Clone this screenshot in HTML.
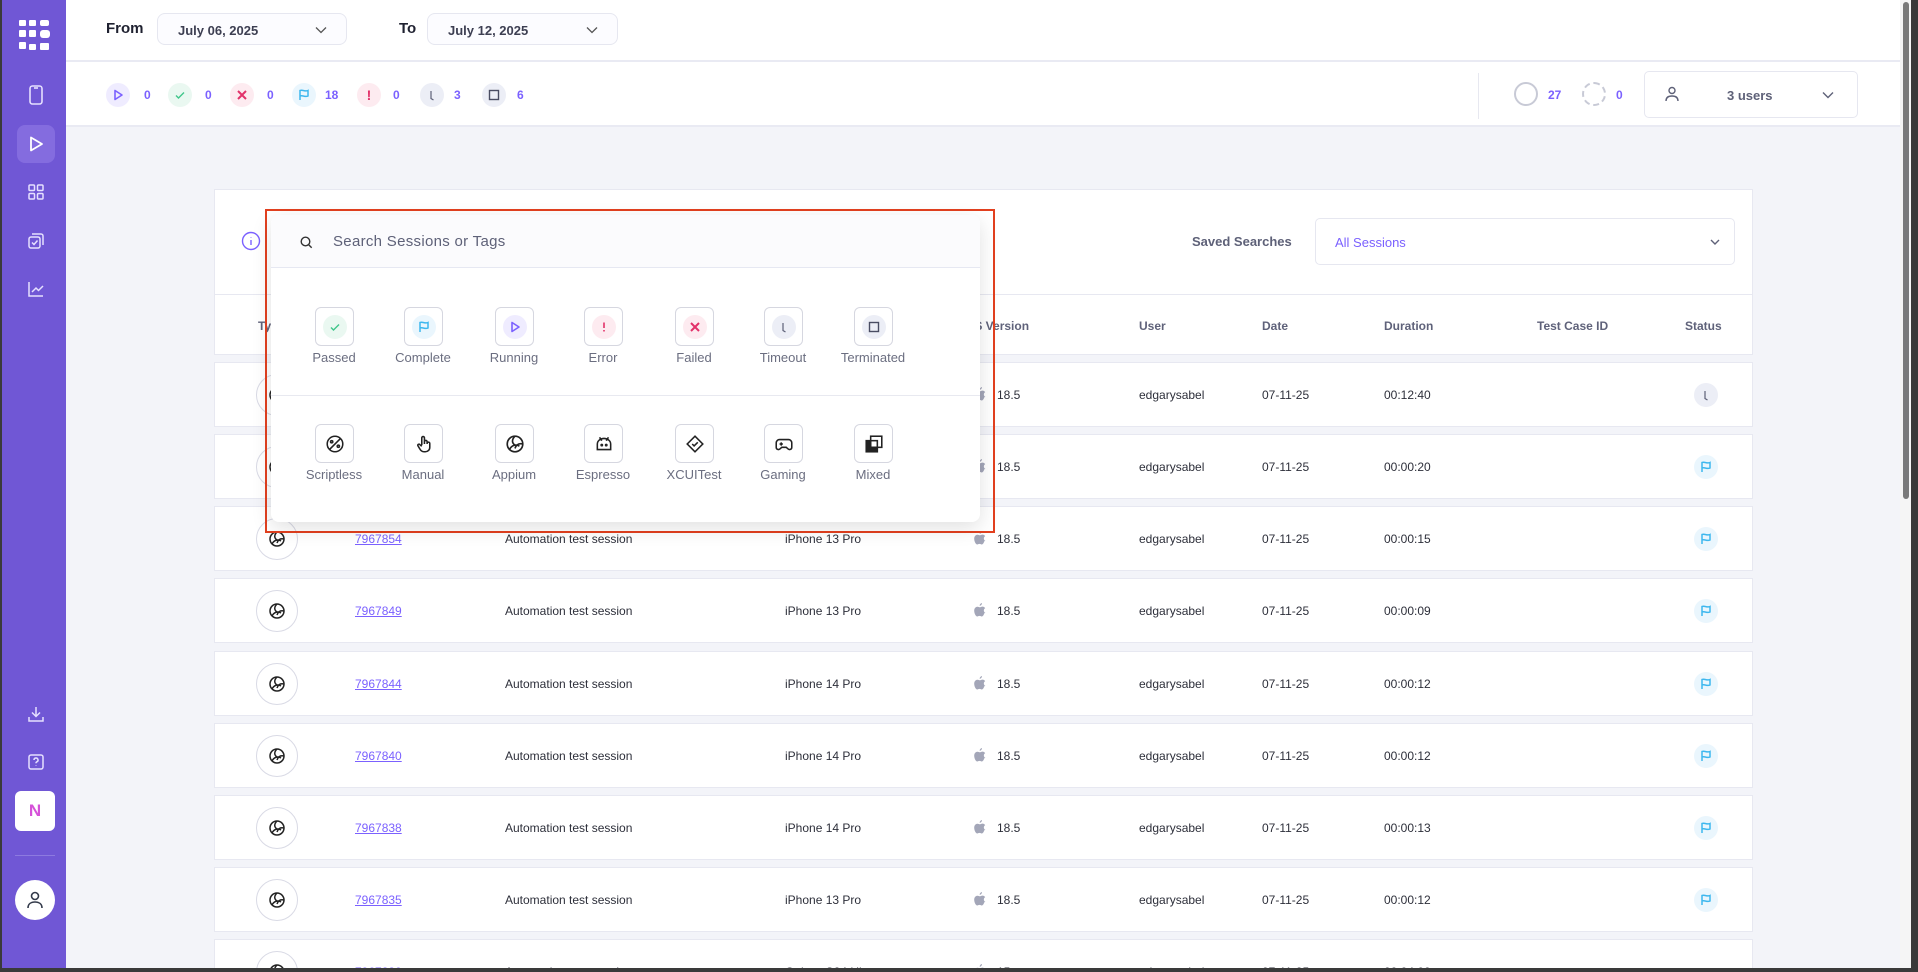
<!DOCTYPE html>
<html><head><meta charset="utf-8"><style>
*{box-sizing:border-box;margin:0;padding:0}
body{width:1918px;height:972px;overflow:hidden;background:#f3f4f9;font-family:"Liberation Sans",sans-serif;position:relative;color:#2d2f3a}
.abs{position:absolute}
#side{left:0;top:0;width:66px;height:972px;background:#7057d5;border-left:2px solid #3a3a3a}
.nav{position:absolute;left:15px;width:38px;height:38px;display:flex;align-items:center;justify-content:center}
#top{left:66px;top:0;width:1834px;height:62px;background:#fff;border-bottom:2px solid #e9eaf3}
#stats{left:66px;top:62px;width:1834px;height:65px;background:#fff;border-bottom:2px solid #e9eaf3}
.lbl{font-weight:bold;font-size:15px;color:#1f2130}
.date{border:1px solid #e6e7f0;border-radius:8px;background:#fcfcff;height:32px;font-weight:bold;font-size:13px;color:#3d3f52;padding:9px 20px}
.chev{position:absolute;right:18px;top:9px}
.st{position:absolute;top:21px;width:24px;height:24px;border-radius:50%;display:flex;align-items:center;justify-content:center}
.sn{position:absolute;top:26px;font-size:12px;font-weight:bold;color:#7b61ff}
.card{position:absolute;left:214px;width:1539px;background:#fff;border:1px solid #e7e8f1}
.row{height:65px}
.t{position:absolute;font-size:12px;color:#2d2f3a;top:25px}
.h{position:absolute;font-size:12px;font-weight:bold;color:#5f627a;top:24px}
.ty{position:absolute;left:41px;top:11px;width:42px;height:42px;border-radius:50%;border:1px solid #d9dae5;display:flex;align-items:center;justify-content:center}
.sc{position:absolute;left:1479px;top:20px;width:24px;height:24px;border-radius:50%;background:#eaf6fd;display:flex;align-items:center;justify-content:center}
.ap{position:absolute;left:759px;top:24px}
.ib{position:absolute;width:39px;height:39px;border:1px solid #d6d7e0;border-radius:6px;background:#fff;display:flex;align-items:center;justify-content:center}
.ic{width:24px;height:24px;border-radius:50%;display:flex;align-items:center;justify-content:center}
.il{position:absolute;width:100px;text-align:center;font-size:13px;color:#6b6e80}
#rowsclip{position:absolute;left:0;top:0;width:1900px;height:968px;overflow:hidden}
</style></head><body>

<svg width="0" height="0" style="position:absolute">
 <defs>
  <symbol id="appium" viewBox="0 0 18 18"><g fill="none" stroke="#222" stroke-width="1.5"><circle cx="9" cy="9" r="7"/><path d="M9 2c-3 3-3 6 0 8M16 9c-4-1-6 1-7 4M4 14c2-4 6-5 9-3"/></g></symbol>
  <symbol id="apple" viewBox="0 0 12 14"><path fill="#a3a6b8" d="M8 0c0 1.5-1 2.7-2.3 2.8C5.6 1.4 6.7.2 8 0zM10.5 10c-.6 1.5-1.5 3.5-2.7 3.5-1 0-1.3-.6-2.3-.6s-1.4.6-2.3.6C2 13.5.2 10.5.2 7.7.2 5 2 3.7 3.5 3.7c1 0 1.8.6 2.3.6.6 0 1.5-.7 2.6-.7.6 0 2 .2 2.8 1.5-2 1.2-1.7 4 .3 4.9z"/></symbol>
  <symbol id="flag" viewBox="0 0 12 12"><path fill="none" stroke="#3db7ee" stroke-width="1.5" d="M2 11V1.5c3-1 5 1.5 8 0V7c-3 1.5-5-1-8 0"/></symbol>
 </defs>
</svg>

<div id="side" class="abs">
 <svg class="abs" style="left:17px;top:20px" width="32" height="32" viewBox="0 0 32 32" fill="#fff">
  <rect x="0" y="0" width="7" height="6" rx="1"/><rect x="10" y="0" width="7" height="6" rx="1"/><rect x="21" y="0" width="9" height="6" rx="2"/>
  <rect x="0" y="10" width="7" height="7" rx="1"/><rect x="10" y="10" width="7" height="7" rx="1"/><rect x="21" y="10" width="10" height="8" rx="3"/>
  <rect x="0" y="22" width="7" height="7" rx="1"/><rect x="10" y="24" width="7" height="6" rx="1"/><rect x="21" y="23" width="9" height="7" rx="1"/>
 </svg>
 <div class="nav" style="top:76px"><svg width="18" height="20" viewBox="0 0 18 20" fill="none" stroke="#e6e0ff" stroke-width="1.6"><rect x="3" y="1" width="12" height="18" rx="2.5"/><path d="M7 3h4"/></svg></div>
 <div class="nav" style="top:125px;background:#846cdf;border-radius:8px"><svg width="18" height="18" viewBox="0 0 18 18" fill="none" stroke="#fff" stroke-width="1.8"><path d="M4 2.5v13l11-6.5z" stroke-linejoin="round"/></svg></div>
 <div class="nav" style="top:173px"><svg width="18" height="18" viewBox="0 0 18 18" fill="none" stroke="#e6e0ff" stroke-width="1.5"><rect x="2" y="2" width="5.5" height="5.5" rx="1"/><rect x="10.5" y="2" width="5.5" height="5.5" rx="1"/><rect x="2" y="10.5" width="5.5" height="5.5" rx="1"/><rect x="10.5" y="10.5" width="5.5" height="5.5" rx="1"/></svg></div>
 <div class="nav" style="top:222px"><svg width="18" height="18" viewBox="0 0 18 18" fill="none" stroke="#e6e0ff" stroke-width="1.5"><rect x="2" y="5" width="11" height="11" rx="2"/><path d="M5 2h9a2 2 0 0 1 2 2v9"/><path d="M5 10.5l2 2 3.5-4"/></svg></div>
 <div class="nav" style="top:270px"><svg width="18" height="18" viewBox="0 0 18 18" fill="none" stroke="#e6e0ff" stroke-width="1.5"><path d="M2 2v14h14"/><path d="M5 12l4-4 2.5 2.5L16 6"/></svg></div>
 <div class="nav" style="top:695px"><svg width="18" height="18" viewBox="0 0 18 18" fill="none" stroke="#e6e0ff" stroke-width="1.5"><path d="M9 2v9M5 7.5l4 4 4-4M2 12v4h14v-4"/></svg></div>
 <div class="nav" style="top:743px"><svg width="18" height="18" viewBox="0 0 18 18" fill="none" stroke="#e6e0ff" stroke-width="1.5"><rect x="2" y="2" width="14" height="14" rx="2"/><path d="M7 7a2 2 0 1 1 2.8 1.8c-.6.3-.8.7-.8 1.4M9 12.5v.5"/></svg></div>
 <div class="abs" style="left:13px;top:791px;width:40px;height:40px;border-radius:6px;background:#fff;color:#d552d8;font-size:17px;font-weight:bold;text-align:center;line-height:40px">N</div>
 <div class="abs" style="left:13px;top:855px;width:40px;height:1px;background:#8d7ae0"></div>
 <div class="abs" style="left:13px;top:880px;width:40px;height:40px;border-radius:50%;background:#fff;display:flex;align-items:center;justify-content:center"><svg width="20" height="20" viewBox="0 0 20 20" fill="none" stroke="#333a4a" stroke-width="1.6"><circle cx="10" cy="6" r="3.5"/><path d="M3 18c0-4 3-6 7-6s7 2 7 6"/></svg></div>
</div>

<div id="top" class="abs">
 <div class="abs lbl" style="left:40px;top:20px">From</div>
 <div class="abs date" style="left:91px;top:13px;width:190px">July 06, 2025<svg class="chev" width="14" height="14" viewBox="0 0 14 14" fill="none" stroke="#555" stroke-width="1.3"><path d="M2 4.5l5 5 5-5"/></svg></div>
 <div class="abs lbl" style="left:333px;top:20px">To</div>
 <div class="abs date" style="left:361px;top:13px;width:191px">July 12, 2025<svg class="chev" width="14" height="14" viewBox="0 0 14 14" fill="none" stroke="#555" stroke-width="1.3"><path d="M2 4.5l5 5 5-5"/></svg></div>
</div>

<div id="stats" class="abs">
 <div class="st" style="left:40px;background:#efecff"><svg width="12" height="12" viewBox="0 0 12 12" fill="none" stroke="#7b61ff" stroke-width="1.6"><path d="M3 1.5v9l7-4.5z" stroke-linejoin="round"/></svg></div><div class="sn" style="left:78px">0</div>
 <div class="st" style="left:102px;background:#eaf8f1"><svg width="12" height="12" viewBox="0 0 12 12" fill="none" stroke="#3fc68a" stroke-width="1.4"><path d="M2 6.5l2.5 2.5L10 3.5"/></svg></div><div class="sn" style="left:139px">0</div>
 <div class="st" style="left:164px;background:#fdebf0"><svg width="12" height="12" viewBox="0 0 12 12" fill="none" stroke="#e2326a" stroke-width="2"><path d="M2 2l8 8M10 2l-8 8"/></svg></div><div class="sn" style="left:201px">0</div>
 <div class="st" style="left:226px;background:#eaf6fd"><svg width="12" height="12"><use href="#flag"/></svg></div><div class="sn" style="left:259px">18</div>
 <div class="st" style="left:291px;background:#fdebf0"><span style="color:#e2326a;font-weight:bold;font-size:14px">!</span></div><div class="sn" style="left:327px">0</div>
 <div class="st" style="left:354px;background:#eceef6"><svg width="12" height="12" viewBox="0 0 12 12" fill="none" stroke="#5e6178" stroke-width="1.2"><path d="M5 2v7.5l2.5 1.5"/></svg></div><div class="sn" style="left:388px">3</div>
 <div class="st" style="left:416px;background:#eceef6"><svg width="12" height="12" viewBox="0 0 12 12" fill="none" stroke="#4a4d63" stroke-width="1.4"><rect x="1.5" y="1.5" width="9" height="9"/></svg></div><div class="sn" style="left:451px">6</div>
 <div class="abs" style="left:1412px;top:11px;width:1px;height:46px;background:#e7e8f0"></div>
 <div class="abs" style="left:1448px;top:20px;width:24px;height:24px;border-radius:50%;border:2px solid #c8cad6"></div><div class="sn" style="left:1482px">27</div>
 <div class="abs" style="left:1516px;top:20px;width:24px;height:24px;border-radius:50%;border:2px dashed #c8cad6"></div><div class="sn" style="left:1550px">0</div>
 <div class="abs" style="left:1578px;top:9px;width:214px;height:47px;border:1px solid #e6e7f0;border-radius:5px">
  <svg class="abs" style="left:18px;top:13px" width="18" height="18" viewBox="0 0 18 18" fill="none" stroke="#5e6178" stroke-width="1.4"><circle cx="9" cy="5.5" r="3"/><path d="M3 16c0-3.5 2.5-5 6-5s6 1.5 6 5"/></svg>
  <div class="abs" style="left:82px;top:16px;font-size:13px;font-weight:bold;color:#5e6178">3 users</div>
  <svg class="abs" style="left:176px;top:16px" width="14" height="14" viewBox="0 0 14 14" fill="none" stroke="#5e6178" stroke-width="1.4"><path d="M2 4.5l5 5 5-5"/></svg>
 </div>
</div>

<div class="card" style="top:189px;height:106px">
 <svg class="abs" style="left:26px;top:41px" width="20" height="20" viewBox="0 0 20 20" fill="none" stroke="#7b61ff" stroke-width="1.4"><circle cx="10" cy="10" r="8.5"/><path d="M10 9v5M10 6v.5"/></svg>
 <div class="abs" style="left:977px;top:44px;font-size:13px;font-weight:bold;color:#5e6178">Saved Searches</div>
 <div class="abs" style="left:1100px;top:28px;width:420px;height:47px;border:1px solid #e6e7f0;border-radius:5px">
  <div class="abs" style="left:19px;top:16px;font-size:13px;color:#7b61ff">All Sessions</div>
  <svg class="abs" style="left:393px;top:17px" width="12" height="12" viewBox="0 0 12 12" fill="none" stroke="#5e6178" stroke-width="1.4"><path d="M2 4l4 4 4-4"/></svg>
 </div>
</div>
<div class="card row" style="top:294px;height:61px">
 <div class="h" style="left:43px">Type</div><div class="h" style="left:750px">OS Version</div><div class="h" style="left:924px">User</div><div class="h" style="left:1047px">Date</div><div class="h" style="left:1169px">Duration</div><div class="h" style="left:1322px">Test Case ID</div><div class="h" style="left:1470px">Status</div>
</div>

<div id="rowsclip">
<div class="card row" style="top:362px"><div class="ty"><svg width="18" height="18"><use href="#appium"/></svg></div><div class="t" style="left:140px;color:#7b61ff;text-decoration:underline">7967860</div><div class="t" style="left:290px">Automation test session</div><div class="t" style="left:570px">iPhone 13 Pro</div><svg class="ap" width="12" height="14"><use href="#apple"/></svg><div class="t" style="left:782px">18.5</div><div class="t" style="left:924px">edgarysabel</div><div class="t" style="left:1047px">07-11-25</div><div class="t" style="left:1169px">00:12:40</div><div class="sc" style="background:#eceef6"><svg width="12" height="12" viewBox="0 0 12 12" fill="none" stroke="#5e6178" stroke-width="1.2"><path d="M5 2v7.5l2.5 1.5"/></svg></div></div>
<div class="card row" style="top:434px"><div class="ty"><svg width="18" height="18"><use href="#appium"/></svg></div><div class="t" style="left:140px;color:#7b61ff;text-decoration:underline">7967858</div><div class="t" style="left:290px">Automation test session</div><div class="t" style="left:570px">iPhone 13 Pro</div><svg class="ap" width="12" height="14"><use href="#apple"/></svg><div class="t" style="left:782px">18.5</div><div class="t" style="left:924px">edgarysabel</div><div class="t" style="left:1047px">07-11-25</div><div class="t" style="left:1169px">00:00:20</div><div class="sc"><svg width="12" height="12"><use href="#flag"/></svg></div></div>
<div class="card row" style="top:506px"><div class="ty"><svg width="18" height="18"><use href="#appium"/></svg></div><div class="t" style="left:140px;color:#7b61ff;text-decoration:underline">7967854</div><div class="t" style="left:290px">Automation test session</div><div class="t" style="left:570px">iPhone 13 Pro</div><svg class="ap" width="12" height="14"><use href="#apple"/></svg><div class="t" style="left:782px">18.5</div><div class="t" style="left:924px">edgarysabel</div><div class="t" style="left:1047px">07-11-25</div><div class="t" style="left:1169px">00:00:15</div><div class="sc"><svg width="12" height="12"><use href="#flag"/></svg></div></div>
<div class="card row" style="top:578px"><div class="ty"><svg width="18" height="18"><use href="#appium"/></svg></div><div class="t" style="left:140px;color:#7b61ff;text-decoration:underline">7967849</div><div class="t" style="left:290px">Automation test session</div><div class="t" style="left:570px">iPhone 13 Pro</div><svg class="ap" width="12" height="14"><use href="#apple"/></svg><div class="t" style="left:782px">18.5</div><div class="t" style="left:924px">edgarysabel</div><div class="t" style="left:1047px">07-11-25</div><div class="t" style="left:1169px">00:00:09</div><div class="sc"><svg width="12" height="12"><use href="#flag"/></svg></div></div>
<div class="card row" style="top:651px"><div class="ty"><svg width="18" height="18"><use href="#appium"/></svg></div><div class="t" style="left:140px;color:#7b61ff;text-decoration:underline">7967844</div><div class="t" style="left:290px">Automation test session</div><div class="t" style="left:570px">iPhone 14 Pro</div><svg class="ap" width="12" height="14"><use href="#apple"/></svg><div class="t" style="left:782px">18.5</div><div class="t" style="left:924px">edgarysabel</div><div class="t" style="left:1047px">07-11-25</div><div class="t" style="left:1169px">00:00:12</div><div class="sc"><svg width="12" height="12"><use href="#flag"/></svg></div></div>
<div class="card row" style="top:723px"><div class="ty"><svg width="18" height="18"><use href="#appium"/></svg></div><div class="t" style="left:140px;color:#7b61ff;text-decoration:underline">7967840</div><div class="t" style="left:290px">Automation test session</div><div class="t" style="left:570px">iPhone 14 Pro</div><svg class="ap" width="12" height="14"><use href="#apple"/></svg><div class="t" style="left:782px">18.5</div><div class="t" style="left:924px">edgarysabel</div><div class="t" style="left:1047px">07-11-25</div><div class="t" style="left:1169px">00:00:12</div><div class="sc"><svg width="12" height="12"><use href="#flag"/></svg></div></div>
<div class="card row" style="top:795px"><div class="ty"><svg width="18" height="18"><use href="#appium"/></svg></div><div class="t" style="left:140px;color:#7b61ff;text-decoration:underline">7967838</div><div class="t" style="left:290px">Automation test session</div><div class="t" style="left:570px">iPhone 14 Pro</div><svg class="ap" width="12" height="14"><use href="#apple"/></svg><div class="t" style="left:782px">18.5</div><div class="t" style="left:924px">edgarysabel</div><div class="t" style="left:1047px">07-11-25</div><div class="t" style="left:1169px">00:00:13</div><div class="sc"><svg width="12" height="12"><use href="#flag"/></svg></div></div>
<div class="card row" style="top:867px"><div class="ty"><svg width="18" height="18"><use href="#appium"/></svg></div><div class="t" style="left:140px;color:#7b61ff;text-decoration:underline">7967835</div><div class="t" style="left:290px">Automation test session</div><div class="t" style="left:570px">iPhone 13 Pro</div><svg class="ap" width="12" height="14"><use href="#apple"/></svg><div class="t" style="left:782px">18.5</div><div class="t" style="left:924px">edgarysabel</div><div class="t" style="left:1047px">07-11-25</div><div class="t" style="left:1169px">00:00:12</div><div class="sc"><svg width="12" height="12"><use href="#flag"/></svg></div></div>
<div class="card row" style="top:939px"><div class="ty"><svg width="18" height="18"><use href="#appium"/></svg></div><div class="t" style="left:140px;color:#7b61ff;text-decoration:underline">7967830</div><div class="t" style="left:290px">Automation test session</div><div class="t" style="left:570px">Galaxy S24 Ultra</div><svg class="ap" width="12" height="14"><use href="#apple"/></svg><div class="t" style="left:782px">15</div><div class="t" style="left:924px">edgarysabel</div><div class="t" style="left:1047px">07-11-25</div><div class="t" style="left:1169px">00:04:00</div></div>
</div>

<div class="abs" style="left:265px;top:209px;width:730px;height:324px;border:2px solid #e2401f"></div>
<div class="abs" style="left:271px;top:215px;width:709px;height:307px;background:#fff;border-radius:8px;box-shadow:0 6px 20px rgba(0,0,0,0.12);overflow:hidden">
 <div class="abs" style="left:0;top:0;width:709px;height:53px;background:#fbfbfd;border-bottom:1px solid #e6e8f2"></div>
 <svg class="abs" style="left:29px;top:21px" width="13" height="13" viewBox="0 0 13 13" fill="none" stroke="#333" stroke-width="1.4"><circle cx="5.5" cy="5.5" r="4.3"/><path d="M8.7 8.7l3 3"/></svg>
 <div class="abs" style="left:62px;top:18px;font-size:15px;color:#5e6178;letter-spacing:0.3px">Search Sessions or Tags</div>
 <div class="abs" style="left:0;top:180px;width:709px;height:1px;background:#e8e9f0"></div>
</div>

<div class="ib" style="left:315px;top:307px"><div class="ic" style="background:#eaf8f1"><svg width="12" height="12" viewBox="0 0 12 12" fill="none"><path d="M2 6.5l2.5 2.5L10 3.5" stroke="#3fc68a" stroke-width="1.4"/></svg></div></div><div class="il" style="left:284px;top:350px">Passed</div>
<div class="ib" style="left:404px;top:307px"><div class="ic" style="background:#eaf6fd"><svg width="12" height="12"><use href="#flag"/></svg></div></div><div class="il" style="left:373px;top:350px">Complete</div>
<div class="ib" style="left:495px;top:307px"><div class="ic" style="background:#efecff"><svg width="12" height="12" viewBox="0 0 12 12" fill="none"><path d="M3 1.5v9l7-4.5z" stroke="#7b61ff" stroke-width="1.6" stroke-linejoin="round"/></svg></div></div><div class="il" style="left:464px;top:350px">Running</div>
<div class="ib" style="left:584px;top:307px"><div class="ic" style="background:#fdebf0"><svg width="12" height="12" viewBox="0 0 12 12" fill="none"><path d="M6 1.5v5.5M6 9v1.5" stroke="#e2326a" stroke-width="1.6"/></svg></div></div><div class="il" style="left:553px;top:350px">Error</div>
<div class="ib" style="left:675px;top:307px"><div class="ic" style="background:#fdebf0"><svg width="12" height="12" viewBox="0 0 12 12" fill="none"><path d="M2 2l8 8M10 2l-8 8" stroke="#e2326a" stroke-width="2"/></svg></div></div><div class="il" style="left:644px;top:350px">Failed</div>
<div class="ib" style="left:764px;top:307px"><div class="ic" style="background:#eceef6"><svg width="12" height="12" viewBox="0 0 12 12" fill="none"><path d="M5 2v7.5l2.5 1.5" stroke="#5e6178" stroke-width="1.2"/></svg></div></div><div class="il" style="left:733px;top:350px">Timeout</div>
<div class="ib" style="left:854px;top:307px"><div class="ic" style="background:#eceef6"><svg width="12" height="12" viewBox="0 0 12 12" fill="none"><rect x="1.5" y="1.5" width="9" height="9" stroke="#4a4d63" stroke-width="1.4"/></svg></div></div><div class="il" style="left:823px;top:350px">Terminated</div>

<div class="ib" style="left:315px;top:424px"><svg width="20" height="20" viewBox="0 0 18 18" fill="none" stroke="#222" stroke-width="1.4"><circle cx="9" cy="9" r="7"/><path d="M4 14L14 4"/><circle cx="6" cy="7" r="1"/><circle cx="12" cy="11" r="1"/></svg></div><div class="il" style="left:284px;top:467px">Scriptless</div>
<div class="ib" style="left:404px;top:424px"><svg width="20" height="20" viewBox="0 0 18 18" fill="none" stroke="#222" stroke-width="1.4"><path d="M7 10V3.5a1.2 1.2 0 0 1 2.4 0V9M9.4 8V7a1.2 1.2 0 0 1 2.4 0v2M11.8 8.5a1.2 1.2 0 0 1 2.4 0V12c0 2.5-2 4-4 4H9c-2 0-3-1-4-3l-1.5-2.5a1 1 0 0 1 1.7-1L7 11"/></svg></div><div class="il" style="left:373px;top:467px">Manual</div>
<div class="ib" style="left:495px;top:424px"><svg width="20" height="20"><use href="#appium"/></svg></div><div class="il" style="left:464px;top:467px">Appium</div>
<div class="ib" style="left:584px;top:424px"><svg width="20" height="20" viewBox="0 0 18 18" fill="none" stroke="#222" stroke-width="1.4"><path d="M3 14V9a6 5 0 0 1 12 0v5z M5 3l2 3M13 3l-2 3"/><circle cx="7" cy="10" r=".6"/><circle cx="11" cy="10" r=".6"/></svg></div><div class="il" style="left:553px;top:467px">Espresso</div>
<div class="ib" style="left:675px;top:424px"><svg width="20" height="20" viewBox="0 0 18 18" fill="none" stroke="#222" stroke-width="1.4"><path d="M9 2l7 7-7 7-7-7z"/><path d="M6.5 9l1.7 1.7L11.5 7.5"/></svg></div><div class="il" style="left:644px;top:467px">XCUITest</div>
<div class="ib" style="left:764px;top:424px"><svg width="20" height="20" viewBox="0 0 18 18" fill="none" stroke="#222" stroke-width="1.4"><path d="M5 5h8a3 3 0 0 1 3 3v4a2 2 0 0 1-3.5 1.3L11 12H7l-1.5 1.3A2 2 0 0 1 2 12V8a3 3 0 0 1 3-3z"/><path d="M5 9h3M6.5 7.5v3"/></svg></div><div class="il" style="left:733px;top:467px">Gaming</div>
<div class="ib" style="left:854px;top:424px"><svg width="20" height="20" viewBox="0 0 18 18" fill="none" stroke="#222" stroke-width="1.4"><rect x="2" y="6" width="10" height="10" fill="#222"/><rect x="6" y="2" width="10" height="10" fill="#fff"/><rect x="6" y="6" width="6" height="6"/></svg></div><div class="il" style="left:823px;top:467px">Mixed</div>

<div class="abs" style="left:1900px;top:0;width:18px;height:972px;background:#f5f5f5"></div>
<div class="abs" style="left:1903px;top:2px;width:6px;height:497px;background:#7a7a7a;border-radius:3px"></div>
<div class="abs" style="left:1911px;top:0;width:7px;height:972px;background:#3a3a3a"></div>
<div class="abs" style="left:0;top:968px;width:1918px;height:4px;background:#3a3a3a"></div>
</body></html>
